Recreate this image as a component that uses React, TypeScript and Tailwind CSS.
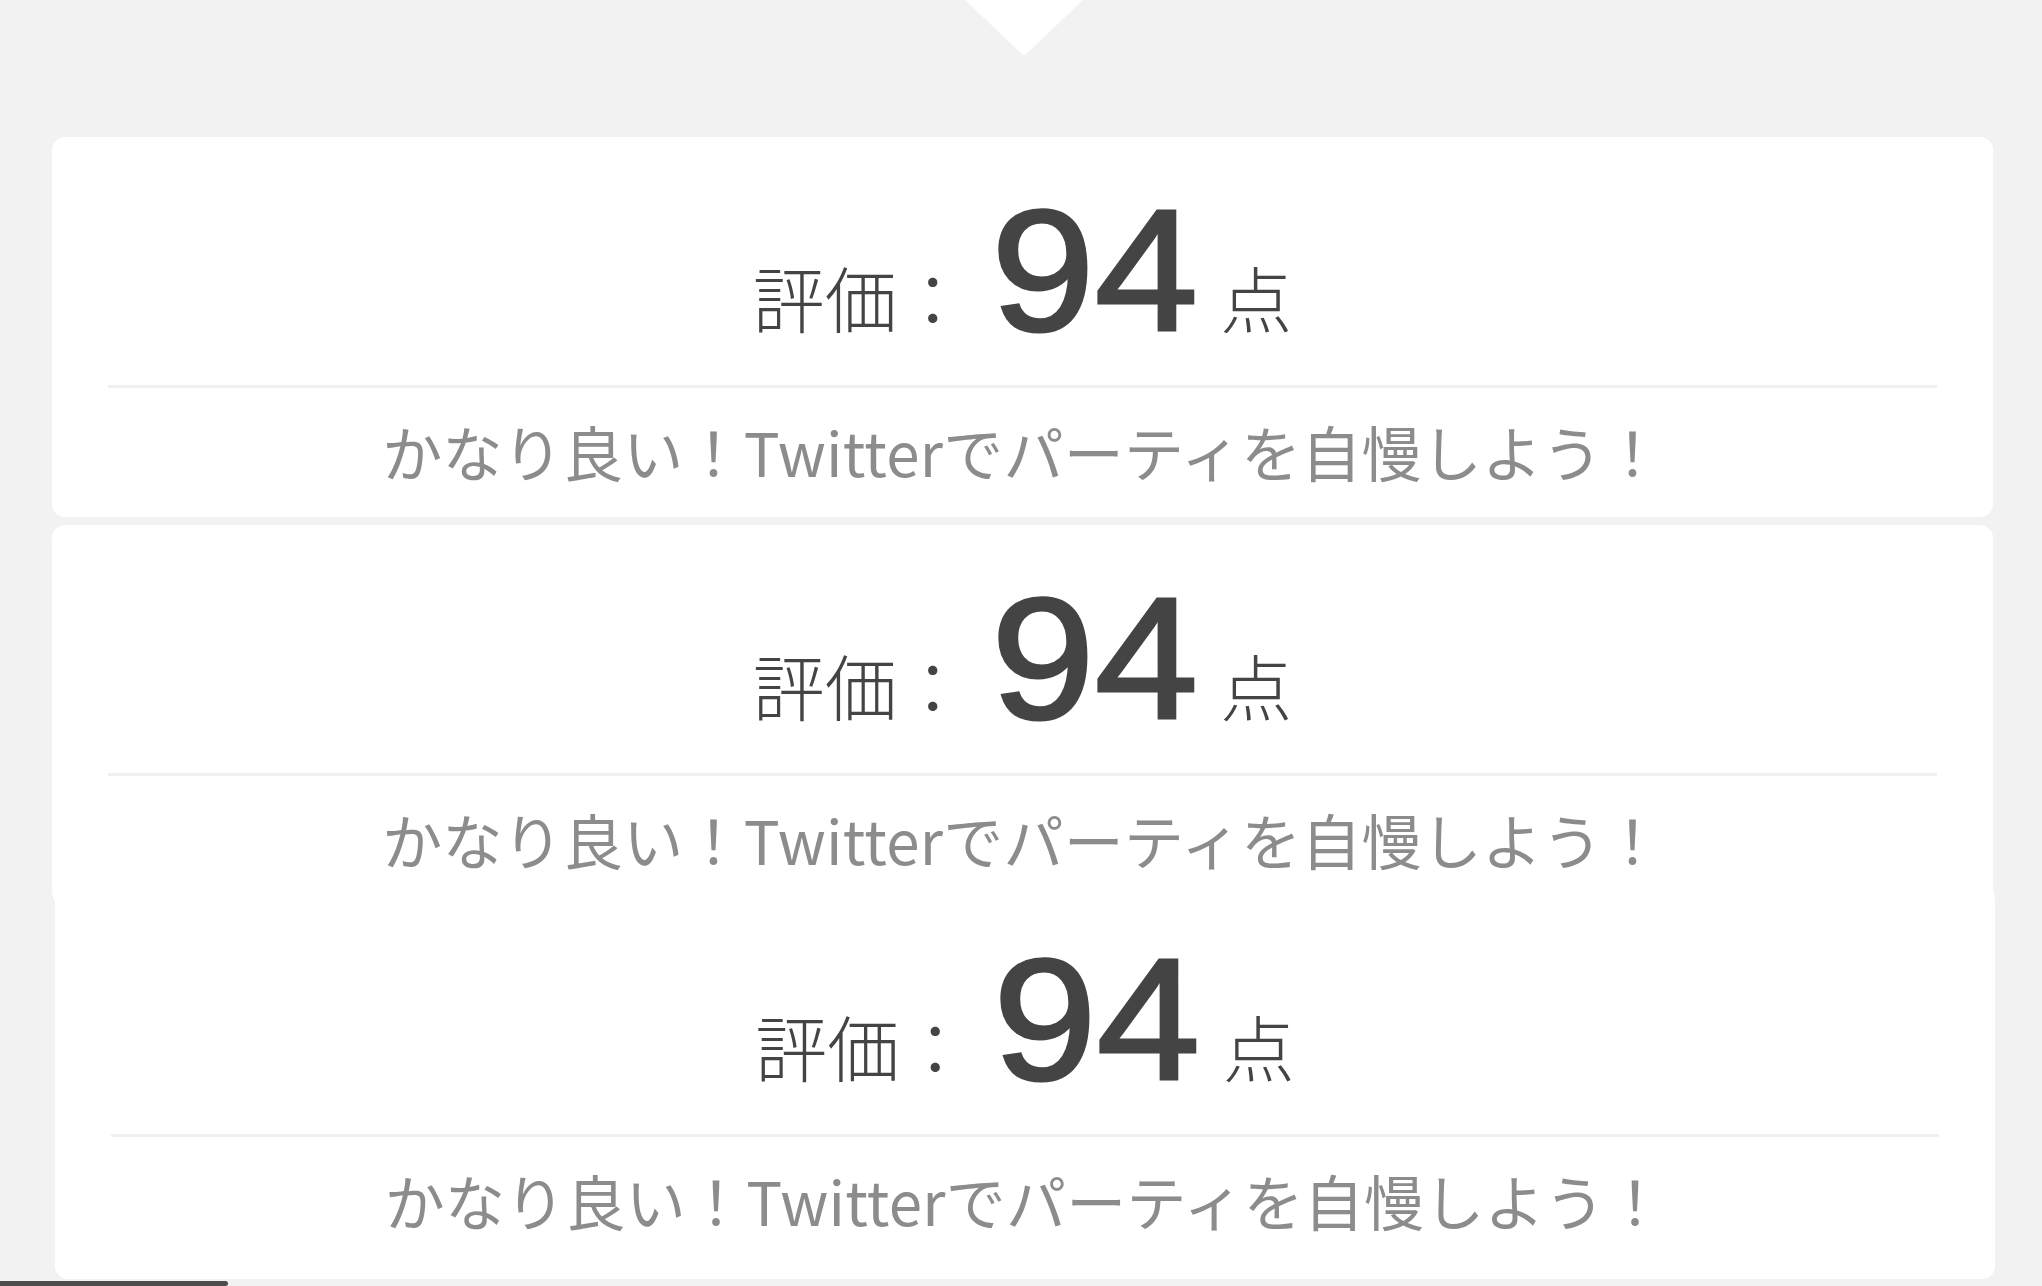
import React from 'react';

interface ScoreCardProps {
    score: number;
    message: string;
    className?: string;
}

const ScoreCard: React.FC<ScoreCardProps> = ({ score, message, className }) => (
    <div className={`bg-white rounded-[13px] pt-[47px] ${className ?? ''}`}>
        {/* Score line */}
        <div className="flex items-baseline justify-center leading-none text-[#444444]">
            <span className="relative -top-[3px] text-[72px] font-light font-['Noto_Sans_CJK_JP',sans-serif]">評価：</span>
            <span className="ml-[30px] inline-block scale-x-[1.08] text-[172px] font-normal font-['Liberation_Sans',Arial,sans-serif] [-webkit-text-stroke:3px_#444444]">
                {score}
            </span>
            <span className="relative -top-[3px] ml-[30px] text-[72px] font-light font-['Noto_Sans_CJK_JP',sans-serif]">点</span>
        </div>

        <div className="mx-[56px] mt-[29px] h-[3px] bg-[#f0f0f0]" />

        <p className="mt-[18px] h-[90px] text-center text-[60px] leading-[90px] tracking-[0.25px] text-[#8c8c8c] font-['Noto_Sans_CJK_JP',sans-serif]">
            {message}
        </p>
    </div>
);

export default function App() {
    const message = 'かなり良い！Twitterでパーティを自慢しよう！';

    return (
        <div className="relative w-full h-[1286px] overflow-hidden bg-[#f2f2f2]">
            {/* Pointer under the header */}
            <div className="flex justify-center h-[137px] pl-[6px]">
                <div className="w-0 h-0 border-l-[59px] border-r-[59px] border-t-[56px] border-l-transparent border-r-transparent border-t-white" />
            </div>

            <div className="flex flex-col">
                <ScoreCard score={94} message={message} className="ml-[52px] mr-[49px] pb-[21px]" />
                <ScoreCard score={94} message={message} className="ml-[52px] mr-[49px] mt-[8px] pb-[21px]" />
                <ScoreCard score={94} message={message} className="ml-[55px] mr-[47px] -mt-[19px] pb-[34px]" />
            </div>

            {/* Scroll indicator */}
            <div className="absolute left-0 bottom-0 w-[228px] h-[5px] rounded-r-[3px] bg-[#4d4d4d]" />
        </div>
    );
}
